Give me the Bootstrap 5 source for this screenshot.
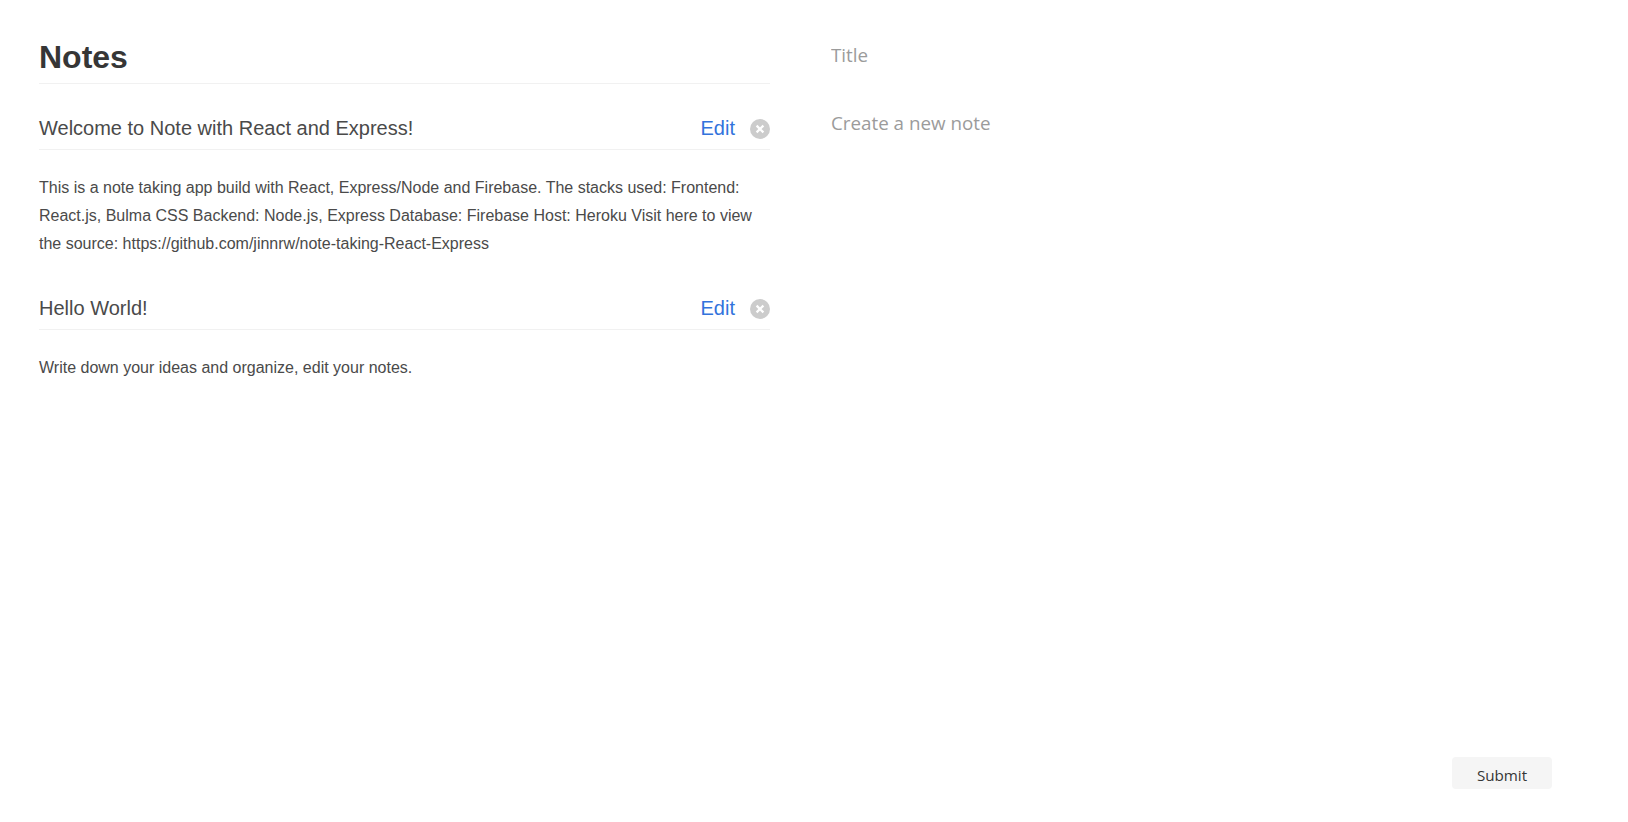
<!DOCTYPE html>
<html lang="en">
<head>
<meta charset="utf-8">
<title>Notes</title>
<link rel="stylesheet" href="https://cdn.jsdelivr.net/npm/bootstrap@5.3.0/dist/css/bootstrap.min.css">
<style>
html, body { height: 100%; }
body { font-family: "Liberation Sans", Arial, sans-serif; color: #4a4a4a; background: #fff; overflow: hidden; }
.app-shell { height: 822px; padding: 37px 76px 33px 39px; gap: 61px; }
.notes-pane { width: 731px; flex: none; }
.form-pane { flex: 1 1 auto; min-width: 0; padding-top: 4px; }
.notes-title { font-size: 32px; font-weight: 700; line-height: 40px; color: #363636; margin: 0; padding-bottom: 6px; border-bottom: 1px solid #f1f1f1; }
.note-head { height: 48px; margin-top: 18px; border-bottom: 1px solid #f1f1f1; padding-top: 7px; }
.note-name { font-size: 20px; line-height: 28px; color: #4a4a4a; margin: 0 0 2px; font-weight: 400; }
.note-edit { font-size: 20px; line-height: 28px; color: #3273dc; text-decoration: none; margin: 0 15px 2px 0; }
.note-del { width: 20px; height: 20px; padding: 0; border: 0; border-radius: 50%; background: #ccc; }
.note-del svg { display: block; }
.note-text { font-size: 16px; line-height: 28px; margin: 24px 0 24px; color: #4a4a4a; }
.field-ghost { font-family: "Open Sans", "Noto Sans", sans-serif; font-size: 18.8px; line-height: 28px; color: #9b9b9b; border: 0; outline: 0; padding: 0; width: 100%; background: transparent; display: block; }
.field-ghost::placeholder { color: #9b9b9b; opacity: 1; }
.field-body { margin-top: 40px; resize: none; flex: 1 1 auto; }
.send-btn { font-family: "Open Sans", "Noto Sans", sans-serif; font-size: 15.2px; line-height: 22px; width: 100px; height: 32px; padding: 4px 0 0; border: 0; border-radius: 4px; background: #f5f5f5; color: #363636; }
</style>
</head>
<body>
<main class="app-shell d-flex">
  <section class="notes-pane">
    <h1 class="notes-title">Notes</h1>
    <div class="note-head d-flex align-items-center justify-content-between">
      <h2 class="note-name">Welcome to Note with React and Express!</h2>
      <div class="d-flex align-items-center">
        <a class="note-edit" href="#">Edit</a>
        <button class="note-del" type="button" aria-label="Delete"><svg width="20" height="20" viewBox="0 0 20 20"><path d="M6.6 6.6l6.8 6.8M13.4 6.6l-6.8 6.8" stroke="#fff" stroke-width="2.2" fill="none"/></svg></button>
      </div>
    </div>
    <p class="note-text">This is a note taking app build with React, Express/Node and Firebase. The stacks used: Frontend: React.js, Bulma CSS Backend: Node.js, Express Database: Firebase Host: Heroku Visit here to view the source: https://github.com/jinnrw/note-taking-React-Express</p>
    <div class="note-head d-flex align-items-center justify-content-between">
      <h2 class="note-name">Hello World!</h2>
      <div class="d-flex align-items-center">
        <a class="note-edit" href="#">Edit</a>
        <button class="note-del" type="button" aria-label="Delete"><svg width="20" height="20" viewBox="0 0 20 20"><path d="M6.6 6.6l6.8 6.8M13.4 6.6l-6.8 6.8" stroke="#fff" stroke-width="2.2" fill="none"/></svg></button>
      </div>
    </div>
    <p class="note-text">Write down your ideas and organize, edit your notes.</p>
  </section>
  <form class="form-pane d-flex flex-column">
    <input class="field-ghost" type="text" placeholder="Title">
    <textarea class="field-ghost field-body" placeholder="Create a new note"></textarea>
    <div class="d-flex justify-content-end">
      <button class="send-btn" type="button">Submit</button>
    </div>
  </form>
</main>
</body>
</html>
